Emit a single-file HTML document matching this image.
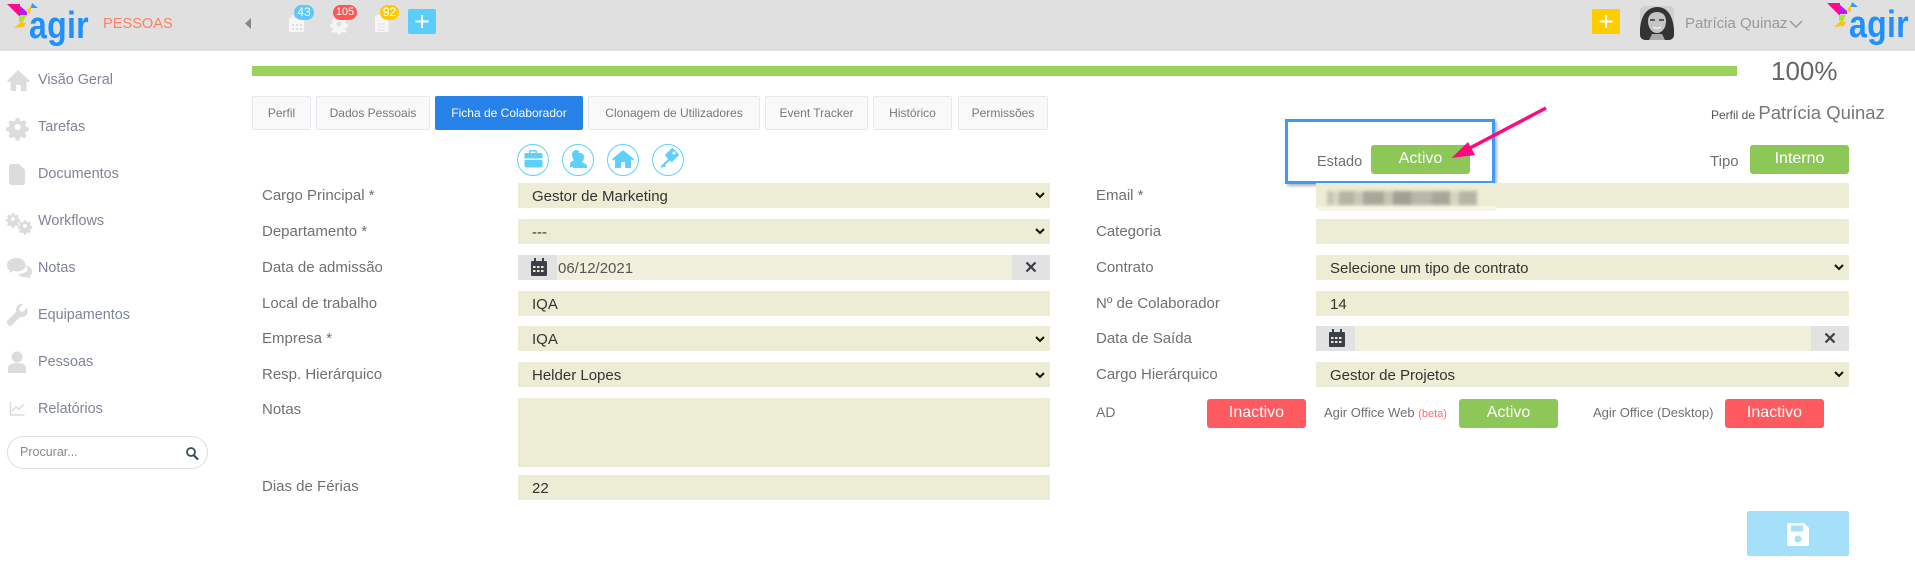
<!DOCTYPE html>
<html lang="pt"><head><meta charset="utf-8"><title>Agir Pessoas</title>
<style>
html,body{margin:0;padding:0;background:#fff;width:1915px;height:569px;overflow:hidden}
body{position:relative;font-family:"Liberation Sans",sans-serif}
.a{position:absolute;white-space:nowrap}
.hd{left:0;top:0;width:1915px;height:51px;background:#e0e0e0}
.s{left:38px;font-size:14.4px;line-height:20px;color:#7f8498;height:20px}
.l{font-size:15px;line-height:20px;height:20px;color:#707070}
.f{background:#edecd4;height:25px;line-height:27px;font-size:15px;color:#333;box-sizing:border-box;padding-left:14px}
.lf{left:518px;width:532px}
.rf{left:1316px;width:533px}
.tab{top:96px;height:34px;box-sizing:border-box;border:1px solid #e8e8ee;background:#f9f9f9;color:#777;font-size:12px;line-height:32px;text-align:center;border-radius:2px}
.b{width:99px;height:29px;border-radius:3px;color:#fff;font-size:16px;line-height:28px;text-align:center}
.g{background:#8cc758}.r{background:#ff5a5f}
.badge{height:15px;top:5px;border-radius:8px;color:#fff;font-size:12px;line-height:15px;text-align:center}
.ad{background:#e2e2e2;height:25px}
.agir{font-size:32px;line-height:40px;color:#1e90ff;font-weight:700;letter-spacing:.3px;transform:scale(1,1.2);transform-origin:0 0}
</style></head><body>
<div class="a hd"></div>
<div class="a agir" style="left:29px;top:1px">agir</div>
<div class="a agir" style="left:1849px;top:0">agir</div>
<svg class="a" style="left:0;top:0" width="1915" height="569" viewBox="0 0 1915 569">
<defs>
<g id="logo">
<polygon points="7,4 20,4 20,17" fill="#ff0a8c"/>
<polygon points="19,5 27,12 27,15 19,15" fill="#b81df0"/>
<polygon points="19,16 26,16 23,22 19,22" fill="#a6ea2a"/>
<polygon points="14,28 21,22 26,23 24,27" fill="#ffc21a"/>
<polygon points="27,11 32,4 30,14" fill="#ffc21a"/>
<polygon points="32,3 38,8 31,8" fill="#2a9df4"/>
</g>
<path id="gear" d="M-2-10h4l.6 3 2.200 1 2.600-1.700 2.800 2.800-1.700 2.600 1 2.200 3 .6v4l-3 .6-1 2.200 1.700 2.600-2.800 2.800-2.600-1.700-2.200 1-.6 3h-4l-.6-3-2.200-1-2.600 1.700-2.800-2.800 1.700-2.600-1-2.200-3-.6v-4l3-.6 1-2.200-1.700-2.600 2.800-2.800 2.600 1.700 2.200-1zM0-3.500a3.500 3.500 0 1 0 .01 0z" fill-rule="evenodd"/>
<g id="cal"><path d="M2 3h2V0h2v3h6V0h2v3h2a1 1 0 0 1 1 1v13a1 1 0 0 1-1 1H2a1 1 0 0 1-1-1V4a1 1 0 0 1 1-1z"/></g>
</defs>
<use href="#logo"/>
<use href="#logo" x="1820" y="-1"/>
<polygon points="251,18 251,29 245,23.500" fill="#888"/>
<!-- header icons -->
<g transform="translate(288,15) scale(.95)" fill="#f6f6f6"><use href="#cal"/></g>
<g fill="#dcdcdc"><rect x="292" y="24" width="2" height="2"/><rect x="296" y="24" width="2" height="2"/><rect x="300" y="24" width="2" height="2"/><rect x="292" y="28" width="2" height="2"/><rect x="296" y="28" width="2" height="2"/><rect x="300" y="28" width="2" height="2"/></g>
<g transform="translate(339,24) scale(.72)" fill="#f6f6f6"><use href="#gear"/></g>
<path d="M375 17a2 2 0 0 1 2-2h7l4.500 5v11a1 1 0 0 1-1 1H376a1 1 0 0 1-1-1z" fill="#f6f6f6"/>
<path d="M378 24h7M378 27h7M378 30h7" stroke="#ddd" stroke-width="1"/>
<rect x="408" y="9" width="28" height="25" rx="2" fill="#5bcdfb"/>
<path d="M422 15v13M415.500 21.500h13" stroke="#fff" stroke-width="2"/>
<rect x="1592" y="9" width="28" height="25" rx="2" fill="#ffcc00"/>
<path d="M1606 15v13M1599.500 21.500h13" stroke="#fff" stroke-width="2"/>
<!-- avatar -->
<clipPath id="av"><rect x="1640" y="6" width="34" height="34" rx="5"/></clipPath>
<g clip-path="url(#av)">
<rect x="1640" y="6" width="34" height="34" fill="#cfcfcf"/>
<path d="M1640 40c-1-14 1-32 17-33 15 0 18 18 17 33z" fill="#333"/>
<path d="M1648 21c0-6 4-9 9-9s9 3 9 9c0 7-4 12-9 12s-9-5-9-12z" fill="#c4c4c4"/>
<path d="M1652 34h10l3 6h-16z" fill="#a8a8a8"/>
<path d="M1650 20h5M1659 20h5" stroke="#333" stroke-width="1.500"/>
<path d="M1653 27q4 2.500 8 0" stroke="#f0f0f0" stroke-width="1.500" fill="none"/>
</g>
<path d="M1790 21l6 6 6-6" fill="none" stroke="#999" stroke-width="1.500"/>
<!-- sidebar icons -->
<g fill="#dcdcdc">
<path d="M18 70L7 81l1.500 1.500 2-1.500v10h5.500v-6h5v6h5.500V81l2 1.500L30 81z"/>
<g transform="translate(17.500,127) scale(.9)"><use href="#gear"/></g>
<path d="M9 167a3 3 0 0 1 3-3h7l6 6v12a3 3 0 0 1-3 3H12a3 3 0 0 1-3-3z"/>
<g transform="translate(13,219) scale(.58)"><use href="#gear"/></g>
<g transform="translate(25,226) scale(.58)"><use href="#gear"/></g>
<path d="M17 258c-6 0-10 3-10 7 0 2 1 4 3 5l-1 3 4-2c5 1 10 0 12-3 2-5-2-10-8-10z"/>
<path d="M25 265c4 1 7 3 7 7 0 2-1 3-2 4v3l-3-2c-3 1-7 0-9-3 5 0 9-2 10-5z"/>
<path d="M27 308l-4 4-3-1-1-3 4-4c-4-1-7 2-7 6v2L7 321v2l2 3h2l9-9h2c4 0 7-4 5-9z"/>
<circle cx="17" cy="357" r="5.500"/>
<path d="M8 373v-5c0-3 3-5 9-5s9 2 9 5v5z"/>
</g>
<path d="M10.500 402v13h14" fill="none" stroke="#dcdcdc" stroke-width="1.500"/>
<path d="M12 411l4-4 3 2 5-5" fill="none" stroke="#dcdcdc" stroke-width="1.500"/>
<!-- search -->
<rect x="7.500" y="436.500" width="200" height="32" rx="16" fill="#fff" stroke="#ddd"/>
<circle cx="191" cy="452" r="4" fill="none" stroke="#3a4a52" stroke-width="1.800"/>
<path d="M194 455.500l4 4" stroke="#3a4a52" stroke-width="2.200"/>
<!-- progress -->
<rect x="252" y="66" width="1485" height="10" fill="#9ad25a"/>
<!-- circle icons -->
<g fill="#fff" stroke="#5fd0fb" stroke-width="1">
<circle cx="533" cy="160" r="15.500"/><circle cx="578" cy="160" r="15.500"/><circle cx="623" cy="160" r="15.500"/><circle cx="668" cy="160" r="15.500"/>
</g>
<g fill="#5fd0fb">
<path d="M529 153v-1.500a1.500 1.500 0 0 1 1.500-1.500h5a1.500 1.500 0 0 1 1.500 1.500V153h4a1.500 1.500 0 0 1 1.500 1.500v4h-18v-4A1.500 1.500 0 0 1 525 153zm1.500 0h5v-1.500h-5zM524.500 160h18v6a1.500 1.500 0 0 1-1.500 1.500h-15a1.500 1.500 0 0 1-1.500-1.500z" fill-rule="evenodd"/>
<path d="M570 167v-3c0-2 3-3 4-4-1-1-2-3-2-5 0-3 2-5 4-5 2 0 3 1 3.500 2-1.500 1-2.500 3-2.500 5 0 2 1 4 2 5-3 1-5 2-5 5z"/>
<path d="M573 168v-2c0-2 4-3 5-4-1-1-2-3-2-5 0-3 2-4 4-4s4 1 4 4c0 2-1 4-2 5 1 1 5 2 5 4v2z"/>
<path d="M623 150l-11 9 1.500 1.500 1.500-1V168h6v-6h4v6h6v-8.500l1.500 1 1.500-1.500z"/>
<g transform="translate(672,155) rotate(45)"><rect x="-5" y="-5.500" width="10" height="11" rx="1.500"/></g>
<path d="M668 159l-7.500 7.500 1.500 1.500 1.500-1.500 1 1 1.500-1.500-1-1 5.500-5.500z"/>
</g>
<circle cx="674" cy="153" r="1.500" fill="#fff"/>
</svg>

<div class="a" style="left:103px;top:15px;font-size:14.6px;line-height:18px;color:#ff7f66">PESSOAS</div>
<div class="a badge" style="left:294px;width:20px;background:#5bc8f5">43</div>
<div class="a badge" style="left:333px;width:24px;background:#ff5555;font-size:11px">105</div>
<div class="a badge" style="left:380px;width:19px;background:#ffc800">92</div>
<div class="a" style="left:1685px;top:15px;font-size:15px;line-height:18px;color:#999">Patrícia Quinaz</div>

<div class="a s" style="top:70px">Visão Geral</div>
<div class="a s" style="top:117px">Tarefas</div>
<div class="a s" style="top:164px">Documentos</div>
<div class="a s" style="top:211px">Workflows</div>
<div class="a s" style="top:258px">Notas</div>
<div class="a s" style="top:305px">Equipamentos</div>
<div class="a s" style="top:352px">Pessoas</div>
<div class="a s" style="top:399px">Relatórios</div>
<div class="a" style="left:20px;top:443px;font-size:12.500px;line-height:18px;color:#8a8a8a">Procurar...</div>

<div class="a" style="left:1771px;top:54px;font-size:26px;line-height:34px;color:#666">100%</div>
<div class="a" style="left:1711px;top:101px;font-size:12px;line-height:24px;color:#555">Perfil de <span style="font-size:18.500px;color:#777">Patrícia Quinaz</span></div>

<div class="a tab" style="left:252px;width:59px">Perfil</div>
<div class="a tab" style="left:316px;width:114px">Dados Pessoais</div>
<div class="a tab" style="left:435px;width:148px;background:#2681e8;border-color:#2681e8;color:#fff">Ficha de Colaborador</div>
<div class="a tab" style="left:588px;width:172px">Clonagem de Utilizadores</div>
<div class="a tab" style="left:765px;width:103px">Event Tracker</div>
<div class="a tab" style="left:873px;width:79px">Histórico</div>
<div class="a tab" style="left:958px;width:90px">Permissões</div>

<div class="a" style="left:1285px;top:119px;width:210px;height:65px;box-sizing:border-box;border:3.500px solid #3d9af5;box-shadow:2px 2px 3px rgba(0,0,0,.3)"></div>
<div class="a l" style="left:1317px;top:152px;font-size:14.500px">Estado</div>
<div class="a b g" style="left:1371px;top:145px">Activo</div>
<div class="a l" style="left:1710px;top:152px">Tipo</div>
<div class="a b g" style="left:1750px;top:145px">Interno</div>

<!-- left labels -->
<div class="a l" style="left:262px;top:186px">Cargo Principal *</div>
<div class="a l" style="left:262px;top:222px">Departamento *</div>
<div class="a l" style="left:262px;top:258px">Data de admissão</div>
<div class="a l" style="left:262px;top:294px">Local de trabalho</div>
<div class="a l" style="left:262px;top:329px">Empresa *</div>
<div class="a l" style="left:262px;top:365px">Resp. Hierárquico</div>
<div class="a l" style="left:262px;top:400px">Notas</div>
<div class="a l" style="left:262px;top:477px">Dias de Férias</div>

<!-- left fields -->
<div class="a f lf" style="top:183px">Gestor de Marketing</div>
<div class="a f lf" style="top:219px">---</div>
<div class="a f lf" style="top:255px;background:#f1f0dc;padding-left:40px;color:#555">06/12/2021</div>
<div class="a ad" style="left:518px;top:255px;width:39px"></div>
<div class="a ad" style="left:1012px;top:255px;width:38px"></div>
<div class="a f lf" style="top:291px">IQA</div>
<div class="a f lf" style="top:326px">IQA</div>
<div class="a f lf" style="top:362px">Helder Lopes</div>
<div class="a f lf" style="top:398px;height:69px"></div>
<div class="a f lf" style="top:475px">22</div>

<!-- right labels -->
<div class="a l" style="left:1096px;top:186px">Email *</div>
<div class="a l" style="left:1096px;top:222px">Categoria</div>
<div class="a l" style="left:1096px;top:258px">Contrato</div>
<div class="a l" style="left:1096px;top:294px">Nº de Colaborador</div>
<div class="a l" style="left:1096px;top:329px">Data de Saída</div>
<div class="a l" style="left:1096px;top:365px">Cargo Hierárquico</div>
<div class="a l" style="left:1096px;top:402px;font-size:14px">AD</div>
<div class="a l" style="left:1324px;top:403px;font-size:13px">Agir Office Web <span style="font-size:11px;color:#ff6b70">(beta)</span></div>
<div class="a l" style="left:1593px;top:403px;font-size:13px">Agir Office (Desktop)</div>

<!-- right fields -->
<div class="a f rf" style="top:183px"></div>
<div class="a" style="left:1318px;top:206px;width:178px;height:5px;background:#f5f4e8"></div>
<div class="a" style="left:1327px;top:191px;width:150px;height:14px;background:linear-gradient(90deg,#c5c5b3 0 4%,#d5d5c3 4% 8%,#b5b4a5 8% 18%,#c9c8b6 18% 24%,#a8a89a 24% 38%,#c5c4b2 38% 44%,#a0a094 44% 56%,#b8b7a7 56% 70%,#a8a89a 70% 82%,#d5d4c0 82% 88%,#b5b5a6 88% 100%);filter:blur(1.500px)"></div>
<div class="a f rf" style="top:219px"></div>
<div class="a f rf" style="top:255px">Selecione um tipo de contrato</div>
<div class="a f rf" style="top:291px">14</div>
<div class="a f rf" style="top:326px;background:#f1f0dc"></div>
<div class="a ad" style="left:1316px;top:326px;width:39px"></div>
<div class="a ad" style="left:1811px;top:326px;width:38px"></div>
<div class="a f rf" style="top:362px">Gestor de Projetos</div>

<div class="a b r" style="left:1207px;top:399px">Inactivo</div>
<div class="a b g" style="left:1459px;top:399px">Activo</div>
<div class="a b r" style="left:1725px;top:399px">Inactivo</div>
<div class="a" style="left:1747px;top:511px;width:102px;height:45px;background:#a5e0fb;border-radius:2px"></div>

<svg class="a" style="left:0;top:0" width="1915" height="569" viewBox="0 0 1915 569">
<g fill="none" stroke="#111" stroke-width="2">
<path d="M1036 193l4 4 4-4M1036 229l4 4 4-4M1036 337l4 4 4-4M1036 373l4 4 4-4M1835 265l4 4 4-4M1835 372l4 4 4-4"/>
</g>
<g transform="translate(530,258)"><path fill="#3b3f46" d="M2 3h2V0h2v3h6V0h2v3h2a1 1 0 0 1 1 1v13a1 1 0 0 1-1 1H2a1 1 0 0 1-1-1V4a1 1 0 0 1 1-1z"/></g>
<g transform="translate(1328,329)"><path fill="#3b3f46" d="M2 3h2V0h2v3h6V0h2v3h2a1 1 0 0 1 1 1v13a1 1 0 0 1-1 1H2a1 1 0 0 1-1-1V4a1 1 0 0 1 1-1z"/></g>
<g fill="#edecd4">
<rect x="533" y="266" width="2.500" height="2"/><rect x="537" y="266" width="2.500" height="2"/><rect x="541" y="266" width="2.500" height="2"/><rect x="533" y="270" width="2.500" height="2"/><rect x="537" y="270" width="2.500" height="2"/><rect x="541" y="270" width="2.500" height="2"/>
<rect x="1331" y="337" width="2.500" height="2"/><rect x="1335" y="337" width="2.500" height="2"/><rect x="1339" y="337" width="2.500" height="2"/><rect x="1331" y="341" width="2.500" height="2"/><rect x="1335" y="341" width="2.500" height="2"/><rect x="1339" y="341" width="2.500" height="2"/>
</g>
<path d="M1026.500 262.500l9 9M1035.500 262.500l-9 9M1825.500 333.500l9 9M1834.500 333.500l-9 9" stroke="#3b3f46" stroke-width="2.200"/>
<path d="M1789 523h15l5 5v16a2 2 0 0 1-2 2h-18a2 2 0 0 1-2-2v-19a2 2 0 0 1 2-2z" fill="#fff"/>
<rect x="1791" y="525.500" width="12" height="6" fill="#a5e0fb"/><circle cx="1798" cy="539" r="3.500" fill="#a5e0fb"/>
<path d="M1546 108L1470 148" stroke="#ff0a7e" stroke-width="3.500"/>
<polygon points="1451.500,158 1468,142 1475,155" fill="#ff0a7e"/>
</svg>
</body></html>
